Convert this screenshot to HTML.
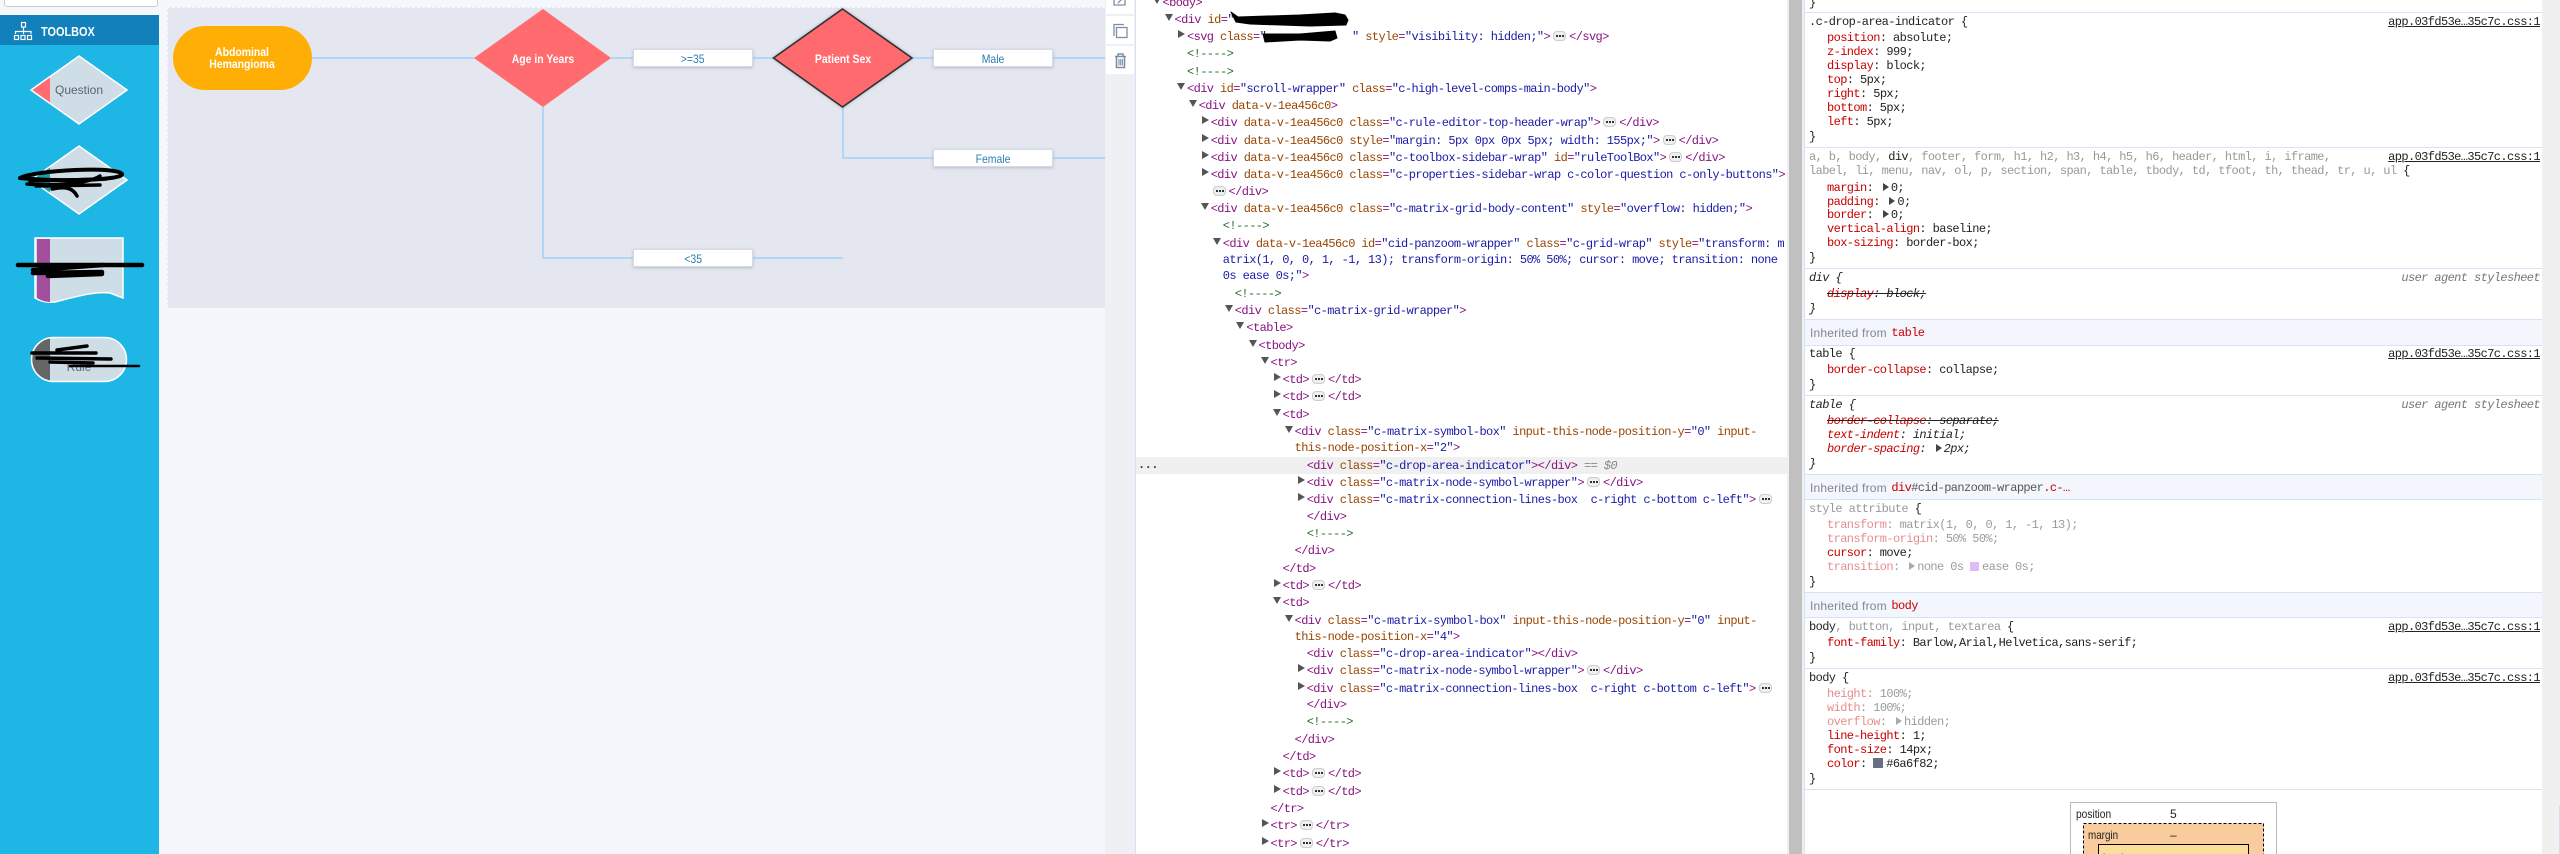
<!DOCTYPE html>
<html><head><meta charset="utf-8"><style>
html,body{margin:0;padding:0;width:2560px;height:854px;overflow:hidden;background:#fff}
#r{position:relative;width:2560px;height:854px;overflow:hidden;background:#f5f7fc}
.b{position:absolute}
.l{position:absolute;white-space:pre;line-height:14px;height:14px;font-family:"Liberation Mono",monospace;font-size:12px;letter-spacing:-.6px;color:#222}
.t{color:#881280}.a{color:#994500}.v{color:#1a1aa6}.c{color:#236e25}
.p{color:#c80000}.g{color:#999}.f{opacity:.45}.m{color:#888}
i.d,i.r{position:absolute;width:0;height:0;border-style:solid}
i.d{left:-10px;top:1px;border-width:7px 4px 0 4px;border-color:#555 transparent transparent transparent}
i.r{left:-9px;top:0;border-width:4px 0 4px 7px;border-color:transparent transparent transparent #555}
b.e{display:inline-block;position:relative;width:11px;height:8px;margin:0 3px;border:1px solid #ccc;border-radius:4px;background:#efefef;vertical-align:-1px}
b.e::after{content:"";position:absolute;left:2px;top:3px;width:2px;height:2px;background:#333;box-shadow:3px 0 #333,6px 0 #333}
u.k{display:inline-block;position:relative;width:11px;height:8px;text-decoration:none}
u.k::after{content:"";position:absolute;left:3px;top:0;border-style:solid;border-width:4px 0 4px 6px;border-color:transparent transparent transparent #444}
.lk{position:absolute;right:20px;white-space:pre;line-height:14px;font-family:"Liberation Mono",monospace;font-size:12px;letter-spacing:-.6px;color:#222;text-decoration:underline}
.ua{position:absolute;right:20px;white-space:pre;line-height:14px;font-family:"Liberation Mono",monospace;font-size:12px;letter-spacing:-.6px;color:#777;font-style:italic}
.s{text-decoration:line-through;text-decoration-color:#222}
.it{font-style:italic}
.hl{position:absolute;left:1805px;width:737px;height:1px;background:#d5e3f5}
.band{position:absolute;left:1805px;width:737px;background:#f3f6fd;border-top:1px solid #d5e3f5;border-bottom:1px solid #d5e3f5;box-sizing:border-box}
.inh{position:absolute;left:1810px;font-family:"Liberation Sans",sans-serif;font-size:12px;line-height:14px;color:#80868e;white-space:pre;letter-spacing:.2px}
.dl{position:absolute;transform:translateX(-50%) scaleX(.87);font-family:"Liberation Sans",sans-serif;font-weight:bold;font-size:12px;line-height:12px;color:#fff;white-space:pre;text-align:center}
.bx{position:absolute;width:120px;height:18px;background:#fff;border:1px solid #d5dae4;box-sizing:border-box;box-shadow:0 1px 3px rgba(100,110,130,.35);text-align:center;font-family:"Liberation Sans",sans-serif;font-size:12px;line-height:18px;color:#2a7fb0}
.bx span{display:inline-block;transform:scaleX(.87)}
</style></head><body><div id="r">

<!-- left sidebar -->
<div class="b" style="left:4px;top:-4px;width:154px;height:11px;background:#fff;border:1px solid #c9ccd2;border-radius:3px;box-sizing:border-box"></div>
<div class="b" style="left:0;top:15px;width:159px;height:839px;background:#1db6e5"></div>
<div class="b" style="left:0;top:15px;width:159px;height:30px;background:#1280bb"></div>
<div class="b" style="left:41px;top:24px;font:bold 13px/16px 'Liberation Sans',sans-serif;color:#fff;transform:scaleX(.84);transform-origin:0 0;white-space:pre">TOOLBOX</div>

<!-- canvas -->
<div class="b" style="left:167px;top:7px;width:938px;height:301px;background:#e4e7f0;border-top:1px dashed #f7f8fb;border-left:1px dashed #f7f8fb;box-sizing:border-box"></div>

<!-- toolbar column -->
<div class="b" style="left:1105px;top:0;width:30px;height:854px;background:#eff0f4"></div>
<div class="b" style="left:1106px;top:0;width:28px;height:14px;background:#fff"></div>
<div class="b" style="left:1106px;top:16px;width:28px;height:28px;background:#fff"></div>
<div class="b" style="left:1106px;top:46px;width:28px;height:28px;background:#fff"></div>

<!-- devtools panels -->
<div class="b" style="left:1135px;top:0;width:1px;height:854px;background:#d5e3f5"></div>
<div class="b" style="left:1136px;top:0;width:651px;height:854px;background:#fff"></div>
<div class="b" style="left:1787px;top:0;width:2px;height:854px;background:#f0f0f0"></div>
<div class="b" style="left:1789px;top:0;width:13px;height:854px;background:#c0c0c0"></div>
<div class="b" style="left:1802px;top:0;width:2px;height:854px;background:#f0f0f0"></div>
<div class="b" style="left:1804px;top:0;width:1px;height:854px;background:#d5e3f5"></div>
<div class="b" style="left:1805px;top:0;width:737px;height:854px;background:#fff"></div>
<div class="b" style="left:2542px;top:0;width:18px;height:854px;background:#f0f0f0"></div>
<div class="b" style="left:2559px;top:806px;width:1px;height:48px;background:#cfdfee"></div>
<div class="b" style="left:1136px;top:457px;width:652px;height:17px;background:#f0f0f0"></div>

<!-- graphics -->
<svg class="b" style="left:0;top:0" width="2560" height="854" viewBox="0 0 2560 854" fill="none">
<defs>
<clipPath id="q1"><rect x="0" y="0" width="50" height="854"/></clipPath>
<filter id="sh" x="-10%" y="-10%" width="120%" height="120%"><feDropShadow dx="0" dy="0" stdDeviation="1.5" flood-color="#667" flood-opacity=".45"/></filter>
</defs>
<!-- toolbox icon -->
<g stroke="#fff" stroke-width="1.2">
<rect x="21.5" y="22.5" width="4" height="4.5"/><path d="M23.5 27V34M15.5 34V31.5H31V34"/>
<rect x="14.5" y="35.5" width="4" height="4"/><rect x="21" y="35.5" width="4" height="4"/><rect x="27.5" y="35.5" width="4" height="4"/>
</g>
<!-- sidebar shapes -->
<path d="M79 56L127 90L79 124L31 90Z" fill="#cfdde6"/>
<path d="M79 56L127 90L79 124L31 90Z" fill="#ff6b6e" clip-path="url(#q1)"/>
<path d="M79 56L127 90L79 124L31 90Z" stroke="#fff" stroke-width="1.5"/>
<path d="M79 146L127 180L79 214L31 180Z" fill="#cfdde6"/>
<path d="M79 146L127 180L79 214L31 180Z" fill="#1d9da6" clip-path="url(#q1)"/>
<path d="M79 146L127 180L79 214L31 180Z" stroke="#fff" stroke-width="1.5"/>
<path d="M35 238H123V298L110 293C95 291 75 297 55 302C46 303 40 301 35 298Z" fill="#cfdde6" stroke="#fff" stroke-width="1.5"/>
<path d="M37 239H50V302C45 302 40 300 37 298Z" fill="#a44f9e"/>
<rect x="31.5" y="337.5" width="95" height="44" rx="22" fill="#cfdde6"/>
<rect x="31.5" y="337.5" width="95" height="44" rx="22" fill="#666" clip-path="url(#q1)"/>
<rect x="31.5" y="337.5" width="95" height="44" rx="22" stroke="#fff" stroke-width="1.5"/>
<!-- connectors -->
<g stroke="#aed8f5" stroke-width="2">
<path d="M312 58H474M611 58H633M753 58H773M913 58H933M1053 58H1105"/>
<path d="M543 107V258H633M753 258H843"/>
<path d="M843 107V158H933M1053 158H1105"/>
</g>
<!-- flow shapes -->
<rect x="173" y="26" width="139" height="64" rx="32" fill="#ffae06"/>
<path d="M543 9L611 58L543 107L474 58Z" fill="#ff6b6e"/>
<path d="M842.5 9L912 58L842.5 107L773.5 58Z" fill="#ff6b6e" stroke="#333" stroke-width="1.6" filter="url(#sh)"/>
<!-- toolbar icons -->
<g stroke="#7d8ea3" stroke-width="1.3">
<path d="M1114 -2V5H1125V0M1118 3L1123 -2"/>
<path d="M1114 36V24.5H1124"/><rect x="1116.5" y="27.5" width="10.5" height="10"/>
<path d="M1115 56.5H1126M1118 56V54H1123V56" stroke-width="1.5"/>
<path d="M1116.5 57V67.5H1124.5V57" stroke-width="1.6"/>
<path d="M1119 59V65.5M1120.7 59V65.5M1122.4 59V65.5" stroke-width="1.1"/>
</g>
<!-- box model -->
<rect x="2070.5" y="802.5" width="206" height="60" stroke="#777" stroke-dasharray="1 1"/>
<rect x="2083.5" y="823.5" width="180" height="40" fill="#f9cc9d" stroke="#000" stroke-dasharray="3 2"/>
<rect x="2098.5" y="844.5" width="150" height="20" fill="#fddd9b" stroke="#000"/>
</svg>

<!-- diagram text -->
<div class="dl" style="left:242px;top:47px;line-height:11.5px">Abdominal
Hemangioma</div>
<div class="dl" style="left:543px;top:53px">Age in Years</div>
<div class="dl" style="left:842.5px;top:53px">Patient Sex</div>
<div class="bx" style="left:633px;top:49px"><span>&gt;=35</span></div>
<div class="bx" style="left:933px;top:49px"><span>Male</span></div>
<div class="bx" style="left:933px;top:149px"><span>Female</span></div>
<div class="bx" style="left:633px;top:249px"><span>&lt;35</span></div>

<!-- sidebar text -->
<div class="b" style="left:0;top:83px;width:158px;text-align:center;font:12px/14px 'Liberation Sans',sans-serif;color:#5d6470">Question</div>
<div class="b" style="left:0;top:360px;width:158px;text-align:center;font:12px/14px 'Liberation Sans',sans-serif;color:#5d6470">Rule</div>

<!-- elements panel -->
<div class="l" style="left:1162.5px;top:-4px"><i class="d"></i><span class="t">&lt;body&gt;</span></div>
<div class="l" style="left:1174.5px;top:13px"><i class="d"></i><span class="t">&lt;div </span><span class="a">id</span><span class="t">=</span><span class="v">"               </span><span class="v">"</span><span class="t">&gt;</span></div>
<div class="l" style="left:1187px;top:30px"><i class="r"></i><span class="t">&lt;svg </span><span class="a">class</span><span class="t">=</span><span class="v">"             "</span> <span class="a">style</span><span class="t">=</span><span class="v">"visibility: hidden;"</span><span class="t">&gt;</span><b class="e"></b><span class="t">&lt;/svg&gt;</span></div>
<div class="l c" style="left:1187px;top:47px">&lt;!----&gt;</div>
<div class="l c" style="left:1187px;top:65px">&lt;!----&gt;</div>
<div class="l" style="left:1187px;top:82px"><i class="d"></i><span class="t">&lt;div </span><span class="a">id</span><span class="t">=</span><span class="v">"scroll-wrapper"</span> <span class="a">class</span><span class="t">=</span><span class="v">"c-high-level-comps-main-body"</span><span class="t">&gt;</span></div>
<div class="l" style="left:1198.7px;top:99px"><i class="d"></i><span class="t">&lt;div </span><span class="a">data-v-1ea456c0</span><span class="t">&gt;</span></div>
<div class="l" style="left:1210.7px;top:116px"><i class="r"></i><span class="t">&lt;div </span><span class="a">data-v-1ea456c0 class</span><span class="t">=</span><span class="v">"c-rule-editor-top-header-wrap"</span><span class="t">&gt;</span><b class="e"></b><span class="t">&lt;/div&gt;</span></div>
<div class="l" style="left:1210.7px;top:134px"><i class="r"></i><span class="t">&lt;div </span><span class="a">data-v-1ea456c0 style</span><span class="t">=</span><span class="v">"margin: 5px 0px 0px 5px; width: 155px;"</span><span class="t">&gt;</span><b class="e"></b><span class="t">&lt;/div&gt;</span></div>
<div class="l" style="left:1210.7px;top:151px"><i class="r"></i><span class="t">&lt;div </span><span class="a">data-v-1ea456c0 class</span><span class="t">=</span><span class="v">"c-toolbox-sidebar-wrap"</span> <span class="a">id</span><span class="t">=</span><span class="v">"ruleToolBox"</span><span class="t">&gt;</span><b class="e"></b><span class="t">&lt;/div&gt;</span></div>
<div class="l" style="left:1210.7px;top:168px"><i class="r"></i><span class="t">&lt;div </span><span class="a">data-v-1ea456c0 class</span><span class="t">=</span><span class="v">"c-properties-sidebar-wrap c-color-question c-only-buttons"</span><span class="t">&gt;</span></div>
<div class="l" style="left:1209.5px;top:185px"><b class="e"></b><span class="t">&lt;/div&gt;</span></div>
<div class="l" style="left:1210.7px;top:202px"><i class="d"></i><span class="t">&lt;div </span><span class="a">data-v-1ea456c0 class</span><span class="t">=</span><span class="v">"c-matrix-grid-body-content"</span> <span class="a">style</span><span class="t">=</span><span class="v">"overflow: hidden;"</span><span class="t">&gt;</span></div>
<div class="l c" style="left:1222.8px;top:219px">&lt;!----&gt;</div>
<div class="l" style="left:1222.8px;top:237px"><i class="d"></i><span class="t">&lt;div </span><span class="a">data-v-1ea456c0 id</span><span class="t">=</span><span class="v">"cid-panzoom-wrapper"</span> <span class="a">class</span><span class="t">=</span><span class="v">"c-grid-wrap"</span> <span class="a">style</span><span class="t">=</span><span class="v">"transform: m</span></div>
<div class="l v" style="left:1222.8px;top:253px">atrix(1, 0, 0, 1, -1, 13); transform-origin: 50% 50%; cursor: move; transition: none</div>
<div class="l" style="left:1222.8px;top:269px"><span class="v">0s ease 0s;"</span><span class="t">&gt;</span></div>
<div class="l c" style="left:1234.8px;top:287px">&lt;!----&gt;</div>
<div class="l" style="left:1234.8px;top:304px"><i class="d"></i><span class="t">&lt;div </span><span class="a">class</span><span class="t">=</span><span class="v">"c-matrix-grid-wrapper"</span><span class="t">&gt;</span></div>
<div class="l" style="left:1246.4px;top:321px"><i class="d"></i><span class="t">&lt;table&gt;</span></div>
<div class="l" style="left:1258.5px;top:339px"><i class="d"></i><span class="t">&lt;tbody&gt;</span></div>
<div class="l" style="left:1270.5px;top:356px"><i class="d"></i><span class="t">&lt;tr&gt;</span></div>
<div class="l" style="left:1282.6px;top:373px"><i class="r"></i><span class="t">&lt;td&gt;</span><b class="e"></b><span class="t">&lt;/td&gt;</span></div>
<div class="l" style="left:1282.6px;top:390px"><i class="r"></i><span class="t">&lt;td&gt;</span><b class="e"></b><span class="t">&lt;/td&gt;</span></div>
<div class="l" style="left:1282.6px;top:408px"><i class="d"></i><span class="t">&lt;td&gt;</span></div>
<div class="l" style="left:1294.6px;top:425px"><i class="d"></i><span class="t">&lt;div </span><span class="a">class</span><span class="t">=</span><span class="v">"c-matrix-symbol-box"</span> <span class="a">input-this-node-position-y</span><span class="t">=</span><span class="v">"0"</span> <span class="a">input-</span></div>
<div class="l" style="left:1294.6px;top:441px"><span class="a">this-node-position-x</span><span class="t">=</span><span class="v">"2"</span><span class="t">&gt;</span></div>
<div class="l" style="left:1138px;top:458px;color:#333;font-weight:bold">...</div>
<div class="l" style="left:1306.7px;top:459px"><span class="t">&lt;div </span><span class="a">class</span><span class="t">=</span><span class="v">"c-drop-area-indicator"</span><span class="t">&gt;&lt;/div&gt;</span><span class="m"> == <span class="it">$0</span></span></div>
<div class="l" style="left:1306.7px;top:476px"><i class="r"></i><span class="t">&lt;div </span><span class="a">class</span><span class="t">=</span><span class="v">"c-matrix-node-symbol-wrapper"</span><span class="t">&gt;</span><b class="e"></b><span class="t">&lt;/div&gt;</span></div>
<div class="l" style="left:1306.7px;top:493px"><i class="r"></i><span class="t">&lt;div </span><span class="a">class</span><span class="t">=</span><span class="v">"c-matrix-connection-lines-box  c-right c-bottom c-left"</span><span class="t">&gt;</span><b class="e"></b></div>
<div class="l t" style="left:1306.7px;top:510px">&lt;/div&gt;</div>
<div class="l c" style="left:1306.7px;top:527px">&lt;!----&gt;</div>
<div class="l t" style="left:1294.6px;top:544px">&lt;/div&gt;</div>
<div class="l t" style="left:1282.6px;top:562px">&lt;/td&gt;</div>
<div class="l" style="left:1282.6px;top:579px"><i class="r"></i><span class="t">&lt;td&gt;</span><b class="e"></b><span class="t">&lt;/td&gt;</span></div>
<div class="l" style="left:1282.6px;top:596px"><i class="d"></i><span class="t">&lt;td&gt;</span></div>
<div class="l" style="left:1294.6px;top:614px"><i class="d"></i><span class="t">&lt;div </span><span class="a">class</span><span class="t">=</span><span class="v">"c-matrix-symbol-box"</span> <span class="a">input-this-node-position-y</span><span class="t">=</span><span class="v">"0"</span> <span class="a">input-</span></div>
<div class="l" style="left:1294.6px;top:630px"><span class="a">this-node-position-x</span><span class="t">=</span><span class="v">"4"</span><span class="t">&gt;</span></div>
<div class="l" style="left:1306.7px;top:647px"><span class="t">&lt;div </span><span class="a">class</span><span class="t">=</span><span class="v">"c-drop-area-indicator"</span><span class="t">&gt;&lt;/div&gt;</span></div>
<div class="l" style="left:1306.7px;top:664px"><i class="r"></i><span class="t">&lt;div </span><span class="a">class</span><span class="t">=</span><span class="v">"c-matrix-node-symbol-wrapper"</span><span class="t">&gt;</span><b class="e"></b><span class="t">&lt;/div&gt;</span></div>
<div class="l" style="left:1306.7px;top:682px"><i class="r"></i><span class="t">&lt;div </span><span class="a">class</span><span class="t">=</span><span class="v">"c-matrix-connection-lines-box  c-right c-bottom c-left"</span><span class="t">&gt;</span><b class="e"></b></div>
<div class="l t" style="left:1306.7px;top:698px">&lt;/div&gt;</div>
<div class="l c" style="left:1306.7px;top:715px">&lt;!----&gt;</div>
<div class="l t" style="left:1294.6px;top:733px">&lt;/div&gt;</div>
<div class="l t" style="left:1282.6px;top:750px">&lt;/td&gt;</div>
<div class="l" style="left:1282.6px;top:767px"><i class="r"></i><span class="t">&lt;td&gt;</span><b class="e"></b><span class="t">&lt;/td&gt;</span></div>
<div class="l" style="left:1282.6px;top:785px"><i class="r"></i><span class="t">&lt;td&gt;</span><b class="e"></b><span class="t">&lt;/td&gt;</span></div>
<div class="l t" style="left:1270.5px;top:802px">&lt;/tr&gt;</div>
<div class="l" style="left:1270.5px;top:819px"><i class="r"></i><span class="t">&lt;tr&gt;</span><b class="e"></b><span class="t">&lt;/tr&gt;</span></div>
<div class="l" style="left:1270.5px;top:837px"><i class="r"></i><span class="t">&lt;tr&gt;</span><b class="e"></b><span class="t">&lt;/tr&gt;</span></div>

<!-- styles panel -->
<div class="l" style="left:1809px;top:-4px">}</div>
<div class="hl" style="top:12px"></div>
<div class="l" style="left:1809px;top:15px">.c-drop-area-indicator {</div>
<div class="lk" style="top:15px">app.03fd53e…35c7c.css:1</div>
<div class="l" style="left:1827px;top:31px"><span class="p">position</span>: absolute;</div>
<div class="l" style="left:1827px;top:45px"><span class="p">z-index</span>: 999;</div>
<div class="l" style="left:1827px;top:59px"><span class="p">display</span>: block;</div>
<div class="l" style="left:1827px;top:73px"><span class="p">top</span>: 5px;</div>
<div class="l" style="left:1827px;top:87px"><span class="p">right</span>: 5px;</div>
<div class="l" style="left:1827px;top:101px"><span class="p">bottom</span>: 5px;</div>
<div class="l" style="left:1827px;top:115px"><span class="p">left</span>: 5px;</div>
<div class="l" style="left:1809px;top:130px">}</div>
<div class="hl" style="top:147px"></div>
<div class="l" style="left:1809px;top:150px"><span class="g">a, b, body, </span>div<span class="g">, footer, form, h1, h2, h3, h4, h5, h6, header, html, i, iframe,</span></div>
<div class="lk" style="top:150px">app.03fd53e…35c7c.css:1</div>
<div class="l" style="left:1809px;top:164px"><span class="g">label, li, menu, nav, ol, p, section, span, table, tbody, td, tfoot, th, thead, tr, u, ul</span> {</div>
<div class="l" style="left:1827px;top:181px"><span class="p">margin</span>: <u class="k"></u>0;</div>
<div class="l" style="left:1827px;top:195px"><span class="p">padding</span>: <u class="k"></u>0;</div>
<div class="l" style="left:1827px;top:208px"><span class="p">border</span>: <u class="k"></u>0;</div>
<div class="l" style="left:1827px;top:222px"><span class="p">vertical-align</span>: baseline;</div>
<div class="l" style="left:1827px;top:236px"><span class="p">box-sizing</span>: border-box;</div>
<div class="l" style="left:1809px;top:251px">}</div>
<div class="hl" style="top:268px"></div>
<div class="l it" style="left:1809px;top:271px">div {</div>
<div class="ua" style="top:271px">user agent stylesheet</div>
<div class="l it s" style="left:1827px;top:287px"><span class="p">display</span>: block;</div>
<div class="l it" style="left:1809px;top:302px">}</div>
<div class="band" style="top:319px;height:27px"></div>
<div class="inh" style="top:326px">Inherited from</div>
<div class="l" style="left:1891.4px;top:326px;color:#c80000">table</div>
<div class="l" style="left:1809px;top:347px">table {</div>
<div class="lk" style="top:347px">app.03fd53e…35c7c.css:1</div>
<div class="l" style="left:1827px;top:363px"><span class="p">border-collapse</span>: collapse;</div>
<div class="l" style="left:1809px;top:378px">}</div>
<div class="hl" style="top:395px"></div>
<div class="l it" style="left:1809px;top:398px">table {</div>
<div class="ua" style="top:398px">user agent stylesheet</div>
<div class="l it s" style="left:1827px;top:414px"><span class="p">border-collapse</span>: separate;</div>
<div class="l it" style="left:1827px;top:428px"><span class="p">text-indent</span>: initial;</div>
<div class="l it" style="left:1827px;top:442px"><span class="p">border-spacing</span>: <u class="k"></u>2px;</div>
<div class="l it" style="left:1809px;top:457px">}</div>
<div class="band" style="top:474px;height:26px"></div>
<div class="inh" style="top:481px">Inherited from</div>
<div class="l" style="left:1891.4px;top:481px;color:#555"><span style="color:#c80000">div</span>#cid-panzoom-wrapper<span style="color:#c80000">.c-…</span></div>
<div class="l g" style="left:1809px;top:502px">style attribute <span style="color:#222">{</span></div>
<div class="l f" style="left:1827px;top:518px"><span class="p">transform</span>: matrix(1, 0, 0, 1, -1, 13);</div>
<div class="l f" style="left:1827px;top:532px"><span class="p">transform-origin</span>: 50% 50%;</div>
<div class="l" style="left:1827px;top:546px"><span class="p">cursor</span>: move;</div>
<div class="l f" style="left:1827px;top:560px"><span class="p">transition</span>: <u class="k"></u>none 0s <span style="display:inline-block;width:9px;height:9px;background:#b46cf0;vertical-align:-1px;margin-right:3px"></span>ease 0s;</div>
<div class="l" style="left:1809px;top:575px">}</div>
<div class="band" style="top:592px;height:26px"></div>
<div class="inh" style="top:599px">Inherited from</div>
<div class="l" style="left:1891.4px;top:599px;color:#c80000">body</div>
<div class="l" style="left:1809px;top:620px">body<span class="g">, button, input, textarea</span> {</div>
<div class="lk" style="top:620px">app.03fd53e…35c7c.css:1</div>
<div class="l" style="left:1827px;top:636px"><span class="p">font-family</span>: Barlow,Arial,Helvetica,sans-serif;</div>
<div class="l" style="left:1809px;top:651px">}</div>
<div class="hl" style="top:668px"></div>
<div class="l" style="left:1809px;top:671px">body {</div>
<div class="lk" style="top:671px">app.03fd53e…35c7c.css:1</div>
<div class="l f" style="left:1827px;top:687px"><span class="p">height</span>: 100%;</div>
<div class="l f" style="left:1827px;top:701px"><span class="p">width</span>: 100%;</div>
<div class="l f" style="left:1827px;top:715px"><span class="p">overflow</span>: <u class="k"></u>hidden;</div>
<div class="l" style="left:1827px;top:729px"><span class="p">line-height</span>: 1;</div>
<div class="l" style="left:1827px;top:743px"><span class="p">font-size</span>: 14px;</div>
<div class="l" style="left:1827px;top:757px"><span class="p">color</span>: <span style="display:inline-block;width:10px;height:10px;background:#6a6f82;vertical-align:-1px;margin-right:3px"></span>#6a6f82;</div>
<div class="l" style="left:1809px;top:772px">}</div>
<div class="hl" style="top:789px"></div>
<div class="b" style="left:2075.5px;top:807px;font:12px/14px 'Liberation Sans',sans-serif;color:#222;transform:scaleX(.85);transform-origin:0 0">position</div>
<div class="b" style="left:2170px;top:807px;font:12px/14px 'Liberation Sans',sans-serif;color:#222">5</div>
<div class="b" style="left:2088px;top:828px;font:12px/14px 'Liberation Sans',sans-serif;color:#222;transform:scaleX(.82);transform-origin:0 0">margin</div>
<div class="b" style="left:2170px;top:828px;font:12px/14px 'Liberation Sans',sans-serif;color:#222">–</div>
<div class="b" style="left:2103px;top:851px;font:12px/14px 'Liberation Sans',sans-serif;color:#222;transform:scaleX(.85);transform-origin:0 0">border</div>

<!-- redaction scribbles -->
<svg class="b" style="left:0;top:0" width="2560" height="854" viewBox="0 0 2560 854" fill="none" stroke="#000" stroke-linecap="round" stroke-linejoin="round">
<path d="M20 178C35 170 118 166 122 174C124 180 60 182 20 178" stroke-width="4"/>
<path d="M27 184C50 186 88 184 100 176M30 181L106 179M36 186L100 185M52 189C62 187 72 186 77 196" stroke-width="3.5"/>
<path d="M18 265H142" stroke-width="4.5"/>
<path d="M33 270L103 265M33 273L102 272M48 276L102 274" stroke-width="4.5"/>
<path d="M32 353L96 353M57 350L87 346M37 358L111 359M50 362L93 363" stroke-width="3.5"/>
<path d="M70 366H139" stroke-width="2.5"/>
<path d="M1231 12L1238 17L1300 15L1335 13L1345 15L1348 20L1346 25L1310 26L1250 24L1236 22Z" fill="#000" stroke-width="1"/>
<path d="M1263 34L1300 34L1335 31L1337 38L1330 41L1300 40L1265 42Z" fill="#000" stroke-width="1"/>
</svg>
</div></body></html>
